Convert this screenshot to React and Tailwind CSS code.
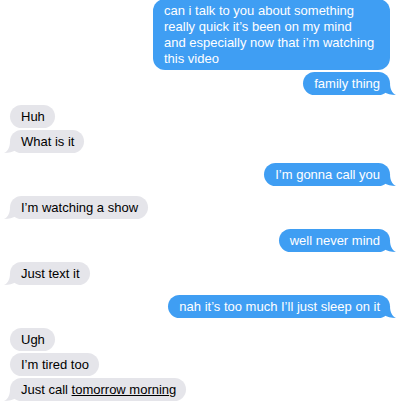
const BLUE = 'bg-[#3f9ef3] text-white';
const GRAY = 'bg-[#e5e5ea] text-black';

const MESSAGES = [
  {
    me: true,
    group: 0,
    wide: true,
    lines: ['can i talk to you about something', 'really quick it’s been on my mind', 'and especially now that i’m watching', 'this video'],
  },
  { me: true, group: 0, text: 'family thing', tail: true },
  { me: false, group: 1, text: 'Huh' },
  { me: false, group: 1, text: 'What is it', tail: true },
  { me: true, group: 2, text: 'I’m gonna call you', tail: true },
  { me: false, group: 3, text: 'I’m watching a show', tail: true },
  { me: true, group: 4, text: 'well never mind', tail: true },
  { me: false, group: 5, text: 'Just text it', tail: true },
  { me: true, group: 6, text: 'nah it’s too much I’ll just sleep on it', tail: true },
  { me: false, group: 7, text: 'Ugh' },
  { me: false, group: 7, text: 'I’m tired too' },
  { me: false, group: 7, text: 'Just call ', link: 'tomorrow morning', tail: true },
];

const Tail = ({ me }) =>
  me ? (
    <svg width="12" height="12" viewBox="0 0 12 12" className="absolute -right-[6px] bottom-0">
      <path d="M0 0 H6 C6 6 8 10 12 12 C7 12 3 11 0 9 Z" fill="#3f9ef3" />
    </svg>
  ) : (
    <svg width="12" height="12" viewBox="0 0 12 12" className="absolute -left-[6px] bottom-0">
      <path d="M12 0 H6 C6 6 4 10 0 12 C5 12 9 11 12 9 Z" fill="#e5e5ea" />
    </svg>
  );

const Bubble = ({ msg }) => (
  <div className={`flex ${msg.me ? 'justify-end pr-[15px]' : 'justify-start pl-[10px]'}`}>
    <div
      className={`relative rounded-[12px] pl-[11px] pr-[10px] py-[3.5px] text-[13px] leading-[16px] whitespace-nowrap ${msg.wide ? 'w-[237px]' : ''} ${msg.me ? BLUE : GRAY}`}
    >
      {msg.lines
        ? msg.lines.map((l, i) => <div key={i}>{l}</div>)
        : msg.text}
      {msg.link && <span className="underline">{msg.link}</span>}
      {msg.tail && <Tail me={msg.me} />}
    </div>
  </div>
);

export default function App() {
  return (
    <div className="w-[405px] h-[405px] overflow-hidden bg-white font-['Liberation_Sans',Arial,sans-serif]">
      <div className="flex flex-col -mt-[1px]">
        {MESSAGES.map((m, i) => (
          <div key={i} className={i === 0 ? '' : m.group === MESSAGES[i - 1].group ? 'mt-[2px]' : 'mt-[10px]'}>
            <Bubble msg={m} />
          </div>
        ))}
      </div>
    </div>
  );
}
